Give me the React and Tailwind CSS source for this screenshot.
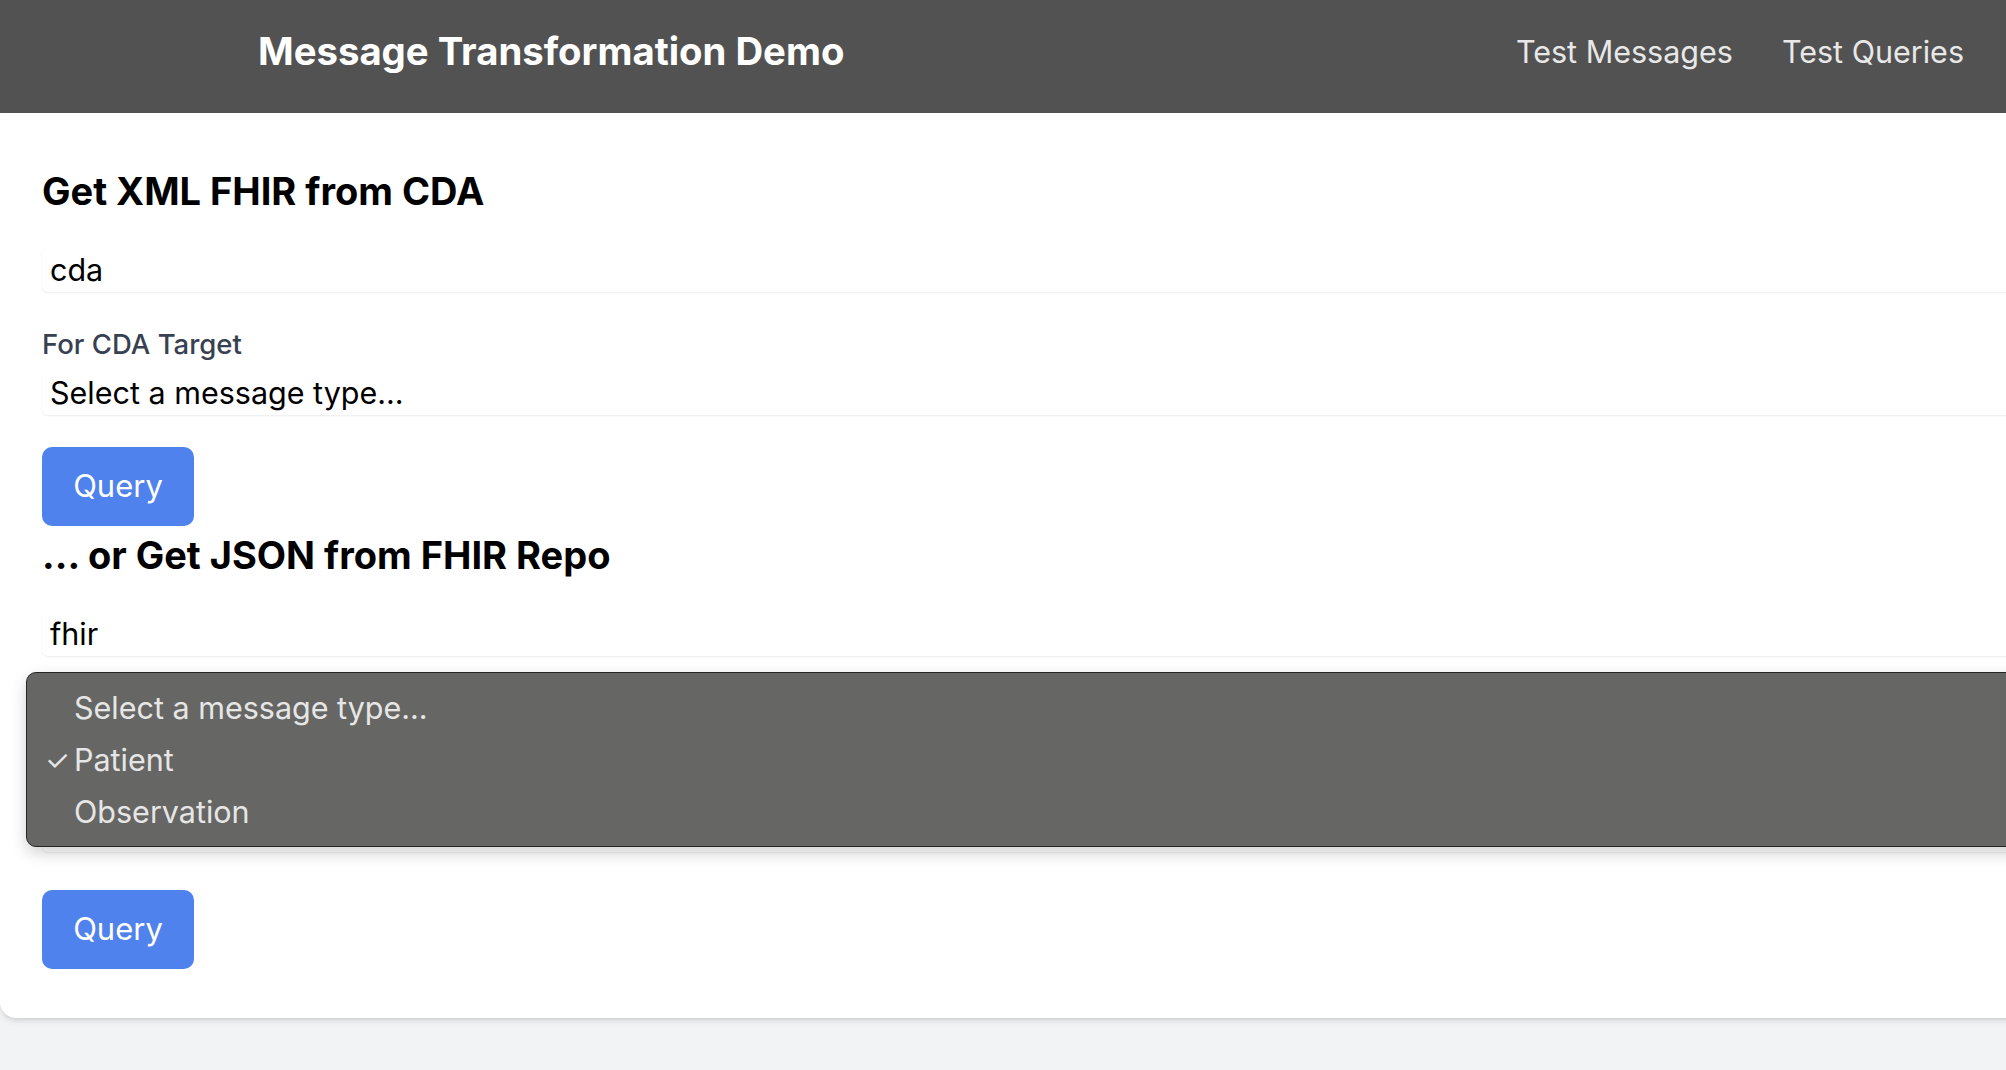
import React from 'react';

const font = { fontFamily: 'Inter, "Noto Sans", sans-serif' };

const Field = ({ value, className = '' }) => (
  <div
    className={`h-[44px] w-full rounded-md bg-white shadow-[0_1px_2px_rgba(0,0,0,0.08)] flex items-center pl-[8px] text-[30.5px] text-black ${className}`}
  >
    {value}
  </div>
);

const QueryButton = ({ className = '' }) => (
  <button
    className={`h-[79px] w-[152px] rounded-[10px] bg-[#5082ee] text-white text-[31px] flex items-center justify-center ${className}`}
  >
    Query
  </button>
);

const App = () => {
  const options = ['Select a message type...', 'Patient', 'Observation'];

  return (
    <div className="min-h-screen w-full overflow-hidden bg-[#f2f3f5]" style={font}>
      <header className="h-[113px] bg-[#525252] flex items-center justify-between pl-[258px] pr-[42px] pb-[10px]">
        <h1 className="text-[38.3px] font-bold text-white">Message Transformation Demo</h1>
        <nav className="flex items-center gap-[49px] text-[30.5px] text-[#e8e8e8]">
          <a>Test Messages</a>
          <a>Test Queries</a>
        </nav>
      </header>

      <main className="relative w-[2200px] bg-white rounded-bl-2xl shadow-md pl-[42px] pt-[58px] pb-[49px]">
        <h2 className="text-[38px] leading-[40px] font-bold text-black">Get XML FHIR from CDA</h2>
        <Field value="cda" className="mt-[37px]" />
        <label className="block mt-[36px] text-[27.5px] leading-[32px] font-medium text-[#374151]">For CDA Target</label>
        <Field value="Select a message type..." className="mt-[11px] h-[42px]" />
        <QueryButton className="mt-[32px]" />

        <h2 className="mt-[9px] text-[38px] leading-[40px] font-bold text-black">... or Get JSON from FHIR Repo</h2>
        <Field value="fhir" className="mt-[37px]" />
        {/* label + select + id field sit under the open popup */}
        <div className="mt-[36px] h-[32px]" />
        <Field value="" className="mt-[11px] h-[42px]" />
        <Field value="" className="mt-[29px]" />
        <QueryButton className="mt-[38px]" />

        {/* native select popup */}
        <div className="absolute left-[26px] top-[559px] w-[2200px] h-[175px] rounded-[10px] bg-[#666664] border border-[#262626] shadow-[0_6px_16px_rgba(0,0,0,0.18)] pt-[9px]">
          {options.map((opt, i) => (
            <div key={opt} className="h-[52px] flex items-center text-[30.5px] text-[#e6e6e6]">
              <span className="w-[47px] pl-[18px] text-[28px]">{i === 1 ? '✓' : ''}</span>
              {opt}
            </div>
          ))}
        </div>
      </main>
    </div>
  );
};

export default App;
